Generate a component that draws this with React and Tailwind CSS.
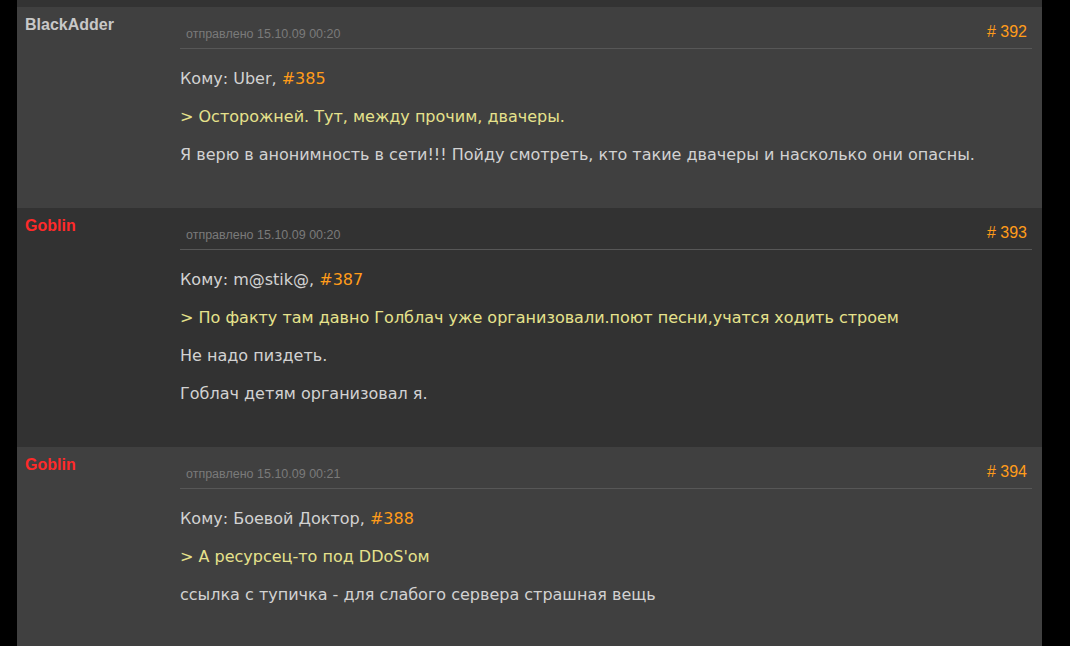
const posts = [
  {
    user: "BlackAdder",
    userColor: "text-[#c8c8c8]",
    bg: "bg-[#404040]",
    date: "15.10.09 00:20",
    num: 392,
    to: "Uber",
    ref: 385,
    quote: "> Осторожней. Тут, между прочим, двачеры.",
    lines: ["Я верю в анонимность в сети!!! Пойду смотреть, кто такие двачеры и насколько они опасны."],
  },
  {
    user: "Goblin",
    userColor: "text-[#ff2a2a]",
    bg: "bg-[#323232]",
    date: "15.10.09 00:20",
    num: 393,
    to: "m@stik@",
    ref: 387,
    quote: "> По факту там давно Голблач уже организовали.поют песни,учатся ходить строем",
    lines: ["Не надо пиздеть.", "Гоблач детям организовал я."],
  },
  {
    user: "Goblin",
    userColor: "text-[#ff2a2a]",
    bg: "bg-[#404040]",
    date: "15.10.09 00:21",
    num: 394,
    to: "Боевой Доктор",
    ref: 388,
    quote: "> А ресурсец-то под DDoS'ом",
    lines: ["ссылка с тупичка - для слабого сервера страшная вещь"],
  },
];

const Post = ({ post }) => (
  <div className={`flex ${post.bg} pb-[43px]`}>
    {/* автор */}
    <div className="w-[163px] shrink-0 pl-[8px] pt-[9px]">
      <div
        className={`text-[16px] font-bold leading-[18px] ${post.userColor}`}
        style={{ fontFamily: "'Liberation Sans', Arial, sans-serif" }}
      >
        {post.user}
      </div>
    </div>

    {/* сообщение */}
    <div className="flex-1 pr-[10px]">
      <div
        className="flex items-end justify-between border-b border-[#575757] pl-[6px] pr-[5px] pt-[16px] pb-[7px]"
        style={{ fontFamily: "'Liberation Sans', Arial, sans-serif" }}
      >
        <span className="text-[12.5px] leading-[14px] text-[#7a7a7a]">
          отправлено {post.date}
        </span>
        <span className="text-[16px] leading-[18px] text-[#ff9c1a]"># {post.num}</span>
      </div>

      <div
        className="pt-[20px] text-[16px] leading-[20px] text-[#d2d2d2]"
        style={{ fontFamily: "'DejaVu Sans', Verdana, sans-serif" }}
      >
        <p className="m-0">
          Кому: {post.to}, <span className="text-[#ff9c1a]">#{post.ref}</span>
        </p>
        <p className="mt-[18px] text-[#e6e28c]">{post.quote}</p>
        {post.lines.map((l, i) => (
          <p key={i} className="mt-[18px]">
            {l}
          </p>
        ))}
      </div>
    </div>
  </div>
);

export default function App() {
  return (
    <div className="min-h-[646px] bg-black overflow-hidden">
      <div className="ml-[17px] w-[1025px] bg-[#333333] pt-[7px]">
        {posts.map((p) => (
          <Post key={p.num} post={p} />
        ))}
      </div>
    </div>
  );
}
